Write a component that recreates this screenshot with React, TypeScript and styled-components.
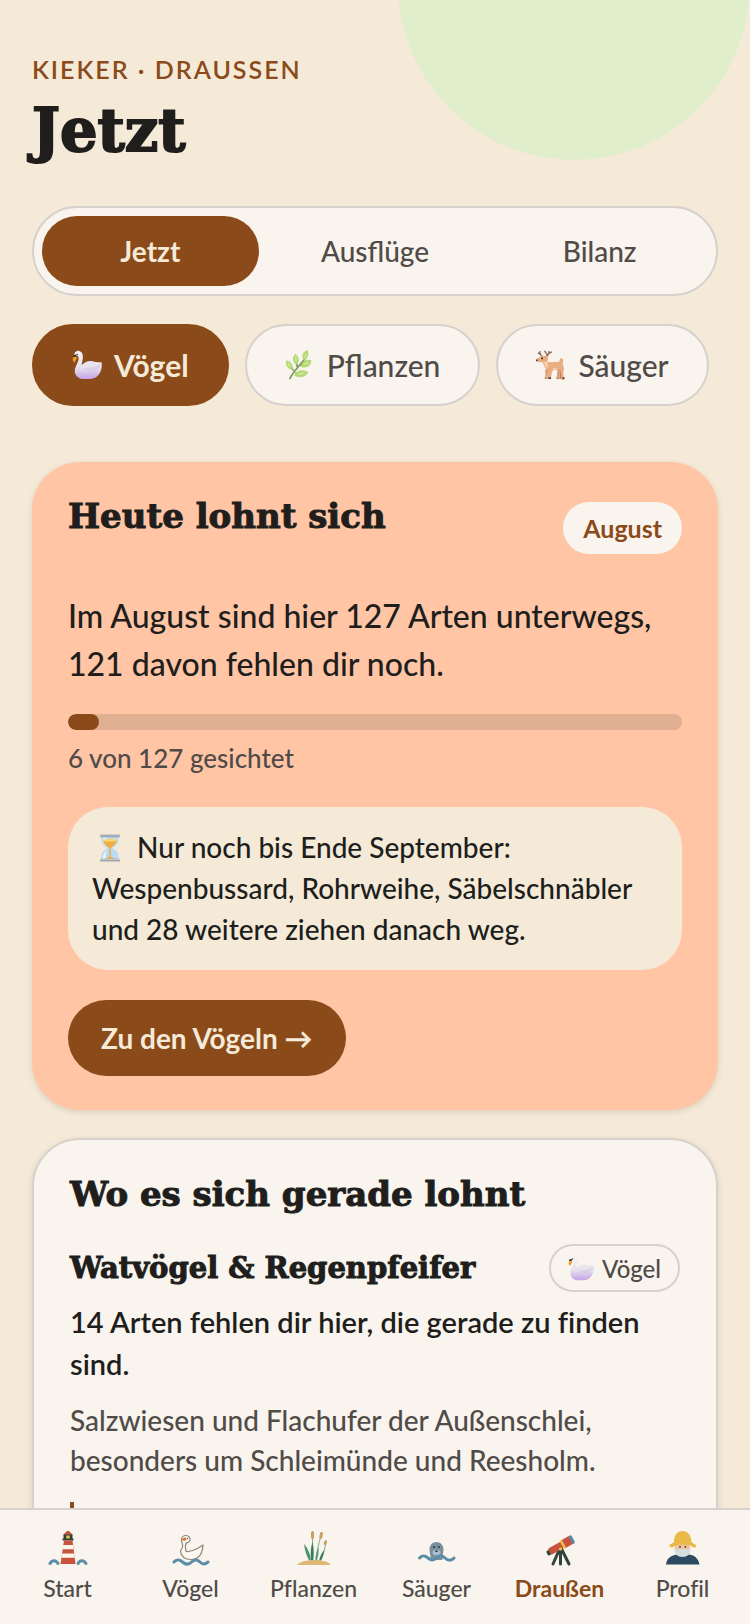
import React, { useState } from 'react';
import styled, { createGlobalStyle, css } from 'styled-components';


const color = {
  sand: '#f5ead8',
  paper: '#f9f4ed',
  line: '#d6d1cc',
  brown: '#8b4a1a',
  ink: '#201e1c',
  muted: '#504b48',
  peach: '#ffc5a5',
  leaf: '#e0eecb',
};

const display = "'DejaVu Serif', serif";


// CSS in JS
const GlobalStyle = createGlobalStyle`
  * {
    box-sizing: border-box;
  }
  body {
    margin: 0;
    background: ${color.sand};
    color: ${color.ink};
    font-family: Lato, sans-serif;
    font-variant-ligatures: none;
  }
  h1, h2, h3, p {
    margin: 0;
  }
  h1, h2, h3 {
    -webkit-text-stroke: 1px ${color.ink};
  }
  button {
    font-family: inherit;
    border: 0;
    cursor: pointer;
  }
`;

const Screen = styled.div`
  position: relative;
  display: flex;
  flex-direction: column;
  height: 100vh;
  overflow: hidden;
`;

const Sun = styled.div`
  position: absolute;
  top: -192px;
  right: 0;
  width: 352px;
  height: 352px;
  border-radius: 50%;
  background: ${color.leaf};
`;

const Content = styled.main`
  position: relative;
  flex: 1;
  min-height: 0;
  padding: 50px 32px 0;
  overflow-y: auto;
  scrollbar-width: none;
`;

const Eyebrow = styled.p`
  color: ${color.brown};
  font-size: 25px;
  font-weight: 600;
  line-height: 38px;
  letter-spacing: 2px;
`;

const Title = styled.h1`
  margin-bottom: 32px;
  font: bold 59px/86px ${display};
  -webkit-text-stroke-width: 2px;
`;

const Segments = styled.div`
  display: grid;
  grid-template-columns: repeat(3, 1fr);
  gap: 8px;
  padding: 8px;
  margin-bottom: 28px;
  border: 2px solid ${color.line};
  border-radius: 45px;
  background: ${color.paper};
`;

const active = css`
  background: ${color.brown};
  border-color: ${color.brown};
  color: ${color.sand};
  font-weight: 700;
`;

const Segment = styled.button<{ $on: boolean }>`
  height: 70px;
  border-radius: 35px;
  background: transparent;
  color: ${color.muted};
  font-size: 28px;
  font-weight: 500;
  ${({ $on }) => $on && active}
`;

const Chips = styled.div`
  display: flex;
  gap: 16px;
  margin-bottom: 56px;
`;

const Chip = styled.button<{ $on: boolean }>`
  display: flex;
  align-items: center;
  gap: 12px;
  height: 82px;
  padding: 0 38px;
  border: 2px solid ${color.line};
  border-radius: 41px;
  background: ${color.paper};
  color: ${color.muted};
  font-size: 30px;
  font-weight: 500;
  ${({ $on }) => $on && active}
`;

const Card = styled.section<{ $outlined?: boolean }>`
  padding: 36px 36px 34px;
  margin-bottom: 28px;
  border-radius: 48px;
  background: ${color.peach};
  box-shadow: 0 2px 6px rgba(60, 50, 30, 0.14);
  ${({ $outlined }) => $outlined && css`
    border: 2px solid ${color.line};
    background: ${color.paper};
  `}
`;

const CardHead = styled.div`
  display: flex;
  align-items: flex-start;
  justify-content: space-between;
`;

const CardTitle = styled.h2`
  font: bold 34px/36px ${display};
`;

const GroupTitle = styled.h3`
  font: bold 29px/36px ${display};
`;

const Month = styled.span`
  margin-top: 4px;
  padding: 8px 20px;
  border-radius: 26px;
  background: ${color.paper};
  color: ${color.brown};
  font-size: 25px;
  font-weight: 700;
  line-height: 36px;
`;

const Lead = styled.p`
  margin-top: 38px;
  font-size: 32px;
  font-weight: 500;
  line-height: 48px;
`;

const Track = styled.div`
  height: 16px;
  margin-top: 26px;
  border-radius: 8px;
  background: #e0ae91;
  overflow: hidden;
`;

const Fill = styled.div`
  height: 100%;
  border-radius: 8px;
  background: ${color.brown};
`;

const Count = styled.p`
  margin-top: 10px;
  color: ${color.muted};
  font-size: 26px;
  font-weight: 500;
  line-height: 36px;
`;

const Note = styled.p`
  margin: 31px 0 30px;
  padding: 20px 24px;
  border-radius: 40px;
  background: ${color.sand};
  font-size: 28px;
  font-weight: 500;
  line-height: 41px;
`;

const MainButton = styled.button`
  height: 76px;
  padding: 0 33px;
  border-radius: 38px;
  background: ${color.brown};
  color: ${color.sand};
  font-size: 28px;
  font-weight: 700;
`;

const GroupHead = styled(CardHead)`
  align-items: center;
  margin-top: 32px;
`;

const Tag = styled.span`
  display: flex;
  align-items: center;
  gap: 8px;
  height: 48px;
  padding: 0 17px;
  border: 2px solid ${color.line};
  border-radius: 24px;
  color: ${color.muted};
  font-size: 24px;
  font-weight: 500;
`;

const Strong = styled.p`
  margin-top: 9px;
  font-size: 29px;
  font-weight: 600;
  line-height: 42px;
`;

const Habitat = styled.p`
  margin-top: 15px;
  color: ${color.muted};
  font-size: 28px;
  font-weight: 500;
  line-height: 40px;
`;

const Quote = styled.div`
  height: 80px;
  margin-top: 22px;
  border-left: 4px solid ${color.brown};
`;

const TabBar = styled.nav`
  position: relative;
  display: flex;
  height: 116px;
  padding: 18px 6px 0;
  border-top: 2px solid ${color.line};
  background: ${color.paper};
`;

const Tab = styled.a<{ $on: boolean }>`
  display: flex;
  flex: 1;
  flex-direction: column;
  align-items: center;
  gap: 6px;
  color: ${({ $on }) => ($on ? color.brown : color.muted)};
  font-size: 23px;
  font-weight: ${({ $on }) => ($on ? 700 : 500)};
  line-height: 28px;
  text-decoration: none;
`;

const Emoji = styled.svg<{ $size: number }>`
  width: ${({ $size }) => $size}px;
  height: ${({ $size }) => $size}px;
`;

const InlineEmoji = styled(Emoji)`
  margin: 0 5px 0 3px;
  vertical-align: -5px;
`;

const Glyph = styled.svg`
  width: 44px;
  height: 40px;
`;


// Emoji
const Swan = ({ size }: { size: number }) => (
  <Emoji $size={size} viewBox="0 0 32 32" aria-hidden="true">
    <defs>
      <linearGradient id="swan" x1="0" y1="0" x2="0" y2="1">
        <stop offset="0" stopColor="#f6f4f5" />
        <stop offset="0.6" stopColor="#e6e0ec" />
        <stop offset="1" stopColor="#c4a2e8" />
      </linearGradient>
    </defs>
    <path fill="url(#swan)" d="M2 6C2.500 2.500 5 .5 7.500 1 11 1.700 12 5 11.500 9c-.3 3-1.200 5-1 7 3.500-3.500 7.500-5 11.500-4 3 .7 7 1.500 9.500 1 1 5-.5 10-3 13.500-2.500 3.500-6.500 4.500-10.500 4.500h-6C7 31 2.500 27 3 21.500 3.400 17 7 13 7 9c0-2-.5-3-2-2.700z" />
    <path fill="#cdbfe0" d="M13 20c5-2 11-1 18-6-1 7-9 11-18 6z" opacity="0.4" />
    <path fill="#3b3536" d="M1 7.500c.3-2 1.500-3 3.500-2.500L5 7.500z" />
    <path fill="#f59a2c" d="m1 8 3.500-1L5 9l-2.500 4.500C.8 12 .6 10 1 8z" />
    <circle cx="5.500" cy="4.800" r="0.800" fill="#222" />
  </Emoji>
);

const Herb = () => (
  <Emoji $size={30} viewBox="0 0 32 32" aria-hidden="true">
    <path d="M5 31C9 22 17 16 22 8M9 22 6 17M13 18l-1-7M11 25l9-1M16 16l7-1" fill="none" stroke="#7f9c62" strokeWidth="2" />
    <g fill="#b3d975">
      <path d="M8 21C2 20 0 16 1.500 11 6 12 9 16 8 21z" />
      <path d="M12.500 16C8 13 7 8 11 4c4 3 5 8 1.500 12z" />
      <path d="M20 11c-3-5-1-9 4-11 2 5 .5 9-4 11z" />
      <path d="M17 18c1-6 6-9 11-7 0 6-5 9-11 7z" />
      <path d="M10 27c3-6 9-7 15-3-3 5-10 7-15 3z" />
    </g>
    <path d="M3 13c.5 2 1 3 3 5M11.500 7v5M22.500 4l-1.500 4M20 15.500l5-2M14 26l7-1.500" fill="none" stroke="#d3ec9b" strokeWidth="1.400" />
  </Emoji>
);

const Deer = () => (
  <Emoji $size={30} viewBox="0 0 32 32" aria-hidden="true">
    <path d="M8 8C5 6 4 4 4 1M5 5 2 3M8 8c4-1 6-3 6-7M12 5 9 1M13 4l4-2" fill="none" stroke="#8c5f51" strokeWidth="1.300" />
    <path fill="#bb7c5b" d="M13 20h3v11h-3zM25 20h3l-1 11h-2z" />
    <path fill="#e8ad80" d="M0 10 5 7l6-1 2 2-1 5 13-.5c0-2 .5-3.500 2-4l2 1.500-.5 5 1.500 5-1 4 1 8h-2.500L26 22l-7-1-2 2-1 8h-3l-.5-10C9 19 7.500 16 7.500 13L3 13z" />
    <path fill="#f5cfa9" d="m8 13 4-1 1 7-3-1zM17 19l7 1-3 2z" />
    <path fill="#6b4439" d="M0 10h2v2H0zM13 29h3v2h-3zM28 29h2.500v2H28zM9.500 29H12v2H9.500zM22 29h2.500v2H22z" />
    <path fill="#d99e75" d="m10 20 3 1-1 10h-2zM23 20l3 1-2 10h-2z" />
    <circle cx="6.500" cy="9" r="0.900" fill="#33211d" />
  </Emoji>
);

const Hourglass = () => (
  <InlineEmoji $size={30} viewBox="0 0 32 32" aria-hidden="true">
    <path fill="#b8dcf7" d="M7 4h18c1 7-2 9-6.500 12C23 19 26 21 25 28H7c-1-7 2-9 6.500-12C9 13 6 11 7 4z" />
    <path fill="#ecf7ff" d="M9 5h3c-2 4 0 7 3 10-4-2-7-5-6-10zM8.500 27c0-4 1-6 4-8-1 3-2 5-1 8z" />
    <path fill="#f0ae3d" d="M9 7.500h14c0 4-3 6-6.200 8.500v9l5.700 3H9.500l5.700-3v-9C12 13.500 9 11.500 9 7.500z" />
    <path fill="#ffd46d" d="M9 7c4-1 10-1 14 0v1.500c-4 1-10 1-14 0z" />
    <path fill="#a1a5ad" d="M5.500 1.500h21v3h-21zM5.500 27.500h21v3h-21z" />
    <path fill="#ced2d7" d="M5.500 1.500h21v1h-21zM5.500 27.500h21v1h-21z" />
  </InlineEmoji>
);


// Tab icons
const Lighthouse = () => (
  <Glyph viewBox="0 0 44 40" aria-hidden="true">
    <path fill="#c9523c" d="m17 7 3.500-3.500a2 2 0 0 1 3 0L27 7z" />
    <path fill="#2e4339" d="M17.500 6.500h9V11h-9z" />
    <path fill="#efc34c" d="M20.300 7.500h3.400V11h-3.400z" />
    <path fill="#2e4339" d="M16.500 10.500h11v2h-11z" />
    <path fill="#c9523c" d="M18 12.500h8.500L29.500 36h-15z" />
    <path fill="#fbf5ea" d="M17.300 17h9.700l.5 4.300H16.600zM16 25.500h12.300l.5 4.300H15.300z" />
    <path d="M4 35.500c2-4 6-3.500 8 0M32 35.500c2-4 6-3.500 8 0" fill="none" stroke="#5b8da8" strokeWidth="3" strokeLinecap="round" />
  </Glyph>
);

const SwanOutline = () => (
  <Glyph viewBox="0 0 44 40" aria-hidden="true">
    <path d="M12.500 12c0-3 2-4.500 4.500-4.500 2.800 0 4.500 2 4 4.500-.4 2-2 2.800-3.500 2.500-2 3-1 5.500-.5 9 3 .5 5-.5 8-1.500 4-1.500 6-3 9-5-.5 8-3 14.500-12 14.500-7 0-10-4-10.500-8.500 1.500-2 3-3.500 2-7-.6-1.800-1-2.800-1-4z" fill="#fbf8f0" stroke="#8f8675" strokeWidth="1.200" strokeLinejoin="round" />
    <path fill="#dd7136" d="m12.500 11 4-1.800 1 2.800-2.500 1z" />
    <circle cx="18.500" cy="10.500" r="0.700" fill="#4d4942" />
    <path d="M5 34c3-3 5-3 8.500 0s6 3 9 0 5.500-3 8.500 0 5 2.500 8 0" fill="none" stroke="#5b8da8" strokeWidth="3" strokeLinecap="round" />
  </Glyph>
);

const Reeds = () => (
  <Glyph viewBox="0 0 44 40" aria-hidden="true">
    <path d="M20.500 32V8M24.500 32c0-8 2-16 4-22M29 32c2-7 4-10 4.500-16" fill="none" stroke="#7fae87" />
    <path fill="#3b7d58" d="M19.200 33c-1-9-.2-14 1.300-19 1.500 6 1.500 12 .7 19z" />
    <path fill="#4a946a" d="M17.500 33c-3-5-4.500-10-5.500-17 3.500 4 6.500 10 7 17z" />
    <path fill="#579c75" d="M23.300 33c0-6 1.500-10 3.200-14 .6 5-.5 10-1.700 14z" />
    <path fill="#3b7d58" d="M27 33c1-5 2.500-8 5.500-11-.5 4-2 8-4 11z" />
    <g fill="#c9a062">
      <rect x="19" y="3" width="3" height="8" rx="1.500" />
      <rect x="27.500" y="4" width="3" height="7" rx="1.500" transform="rotate(12 29 8)" />
      <rect x="32.200" y="12" width="2.800" height="5" rx="1.400" transform="rotate(18 33 14)" />
    </g>
    <path fill="#dfb674" d="M5 37c5-6 28-7 34 0z" />
  </Glyph>
);

const Seal = () => (
  <Glyph viewBox="0 0 44 40" aria-hidden="true">
    <path fill="#79909f" d="M15.500 32c.5-4-1-7-1-10.500C14.500 17 17.500 14 21.500 14s7 3 7 7.500c0 3.500-1.500 6.500-1 10.500z" />
    <ellipse cx="21.500" cy="24.500" rx="4" ry="2.800" fill="#adbfca" />
    <circle cx="19" cy="19" r="1" fill="#283b46" />
    <circle cx="24" cy="19" r="1" fill="#283b46" />
    <ellipse cx="21.500" cy="23.200" rx="1.300" ry="0.900" fill="#283b46" />
    <path d="M4.500 30c3-3 5-3 8.500 0s5.500 3 8.500 0 5.500-3 8.500 0 6.500 3 9 0" fill="none" stroke="#5b8da8" strokeWidth="3" strokeLinecap="round" />
  </Glyph>
);

const Telescope = () => (
  <Glyph viewBox="0 0 44 40" aria-hidden="true">
    <path d="m22 20-7 16M22.500 20v16M23 20l8 16" stroke="#2f453b" strokeWidth="3" strokeLinecap="round" />
    <g transform="rotate(-29 22 18)">
      <rect x="7" y="16" width="5" height="5" rx="1.500" fill="#2f453b" />
      <rect x="10" y="14.500" width="16" height="7" rx="1.500" fill="#c9523c" />
      <rect x="24" y="13.500" width="12" height="9" rx="2.500" fill="#c9523c" />
      <rect x="34" y="13.500" width="3" height="9" rx="1.500" fill="#5687a4" />
      <rect x="24" y="13.500" width="2.500" height="9" fill="#f0c04a" />
    </g>
    <circle cx="22.500" cy="21" r="1.700" fill="#eab54a" />
  </Glyph>
);

const Fisherman = () => (
  <Glyph viewBox="0 0 44 40" aria-hidden="true">
    <path fill="#2c4a61" d="M5 36.500C6 29 11 27 17 26.500h10c6 .5 10 3 11.500 10z" />
    <path fill="#efc49f" d="M14 16h15v8H14z" />
    <path fill="#d6dde1" d="M13.500 20c3 2.500 5 1 8 1s5 1.500 8-1c1 6-3.500 9-8 9s-9-3-8-9z" />
    <circle cx="19" cy="18.800" r="0.900" fill="#333" />
    <circle cx="24.500" cy="18.800" r="0.900" fill="#333" />
    <path fill="#eab94a" d="M13 14c0-7 3-11 8.500-11S30 7 30.500 14c1 1.500 4 2 5 4-1 2.500-4 1.500-6-.5-5-1-10-1-15 0-2 2-5 2.500-6.500.5 1-2.500 4-2.500 5-4z" />
  </Glyph>
);


const segments = ['Jetzt', 'Ausflüge', 'Bilanz'];

const groups = [
  { name: 'Vögel', icon: <Swan size={30} /> },
  { name: 'Pflanzen', icon: <Herb /> },
  { name: 'Säuger', icon: <Deer /> },
];

const tabs = [
  { name: 'Start', icon: <Lighthouse /> },
  { name: 'Vögel', icon: <SwanOutline /> },
  { name: 'Pflanzen', icon: <Reeds /> },
  { name: 'Säuger', icon: <Seal /> },
  { name: 'Draußen', icon: <Telescope /> },
  { name: 'Profil', icon: <Fisherman /> },
];

const seen = 6;
const total = 127;


const App = () => {
  // Hooks
  const [segment, setSegment] = useState('Jetzt');
  const [group, setGroup] = useState('Vögel');

  return (
    <Screen>
      <GlobalStyle />
      <Sun />
      <Content>
        <Eyebrow>KIEKER · DRAUSSEN</Eyebrow>
        <Title>Jetzt</Title>

        <Segments>
          {segments.map((name) =>
            <Segment key={name} $on={name === segment} onClick={() => setSegment(name)}>{name}</Segment>
          )}
        </Segments>

        <Chips>
          {groups.map(({ name, icon }) =>
            <Chip key={name} $on={name === group} onClick={() => setGroup(name)}>{icon}{name}</Chip>
          )}
        </Chips>

        <Card>
          <CardHead>
            <CardTitle>Heute lohnt sich</CardTitle>
            <Month>August</Month>
          </CardHead>
          <Lead>Im August sind hier {total} Arten unterwegs, {total - seen} davon fehlen dir noch.</Lead>
          <Track>
            <Fill style={{ width: `${Math.round(seen / total * 100)}%` }} />
          </Track>
          <Count>{seen} von {total} gesichtet</Count>
          <Note>
            <Hourglass /> Nur noch bis Ende September: Wespenbussard, Rohrweihe, Säbelschnäbler und 28 weitere ziehen danach weg.
          </Note>
          <MainButton>Zu den Vögeln →</MainButton>
        </Card>

        <Card $outlined>
          <CardTitle>Wo es sich gerade lohnt</CardTitle>
          <GroupHead>
            <GroupTitle>Watvögel &amp; Regenpfeifer</GroupTitle>
            <Tag><Swan size={26} />Vögel</Tag>
          </GroupHead>
          <Strong>14 Arten fehlen dir hier, die gerade zu finden sind.</Strong>
          <Habitat>Salzwiesen und Flachufer der Außenschlei, besonders um Schleimünde und Reesholm.</Habitat>
          <Quote />
        </Card>
      </Content>

      <TabBar>
        {tabs.map(({ name, icon }) =>
          <Tab key={name} href="#" $on={name === 'Draußen'}>{icon}{name}</Tab>
        )}
      </TabBar>
    </Screen>
  );
};

export default App;
